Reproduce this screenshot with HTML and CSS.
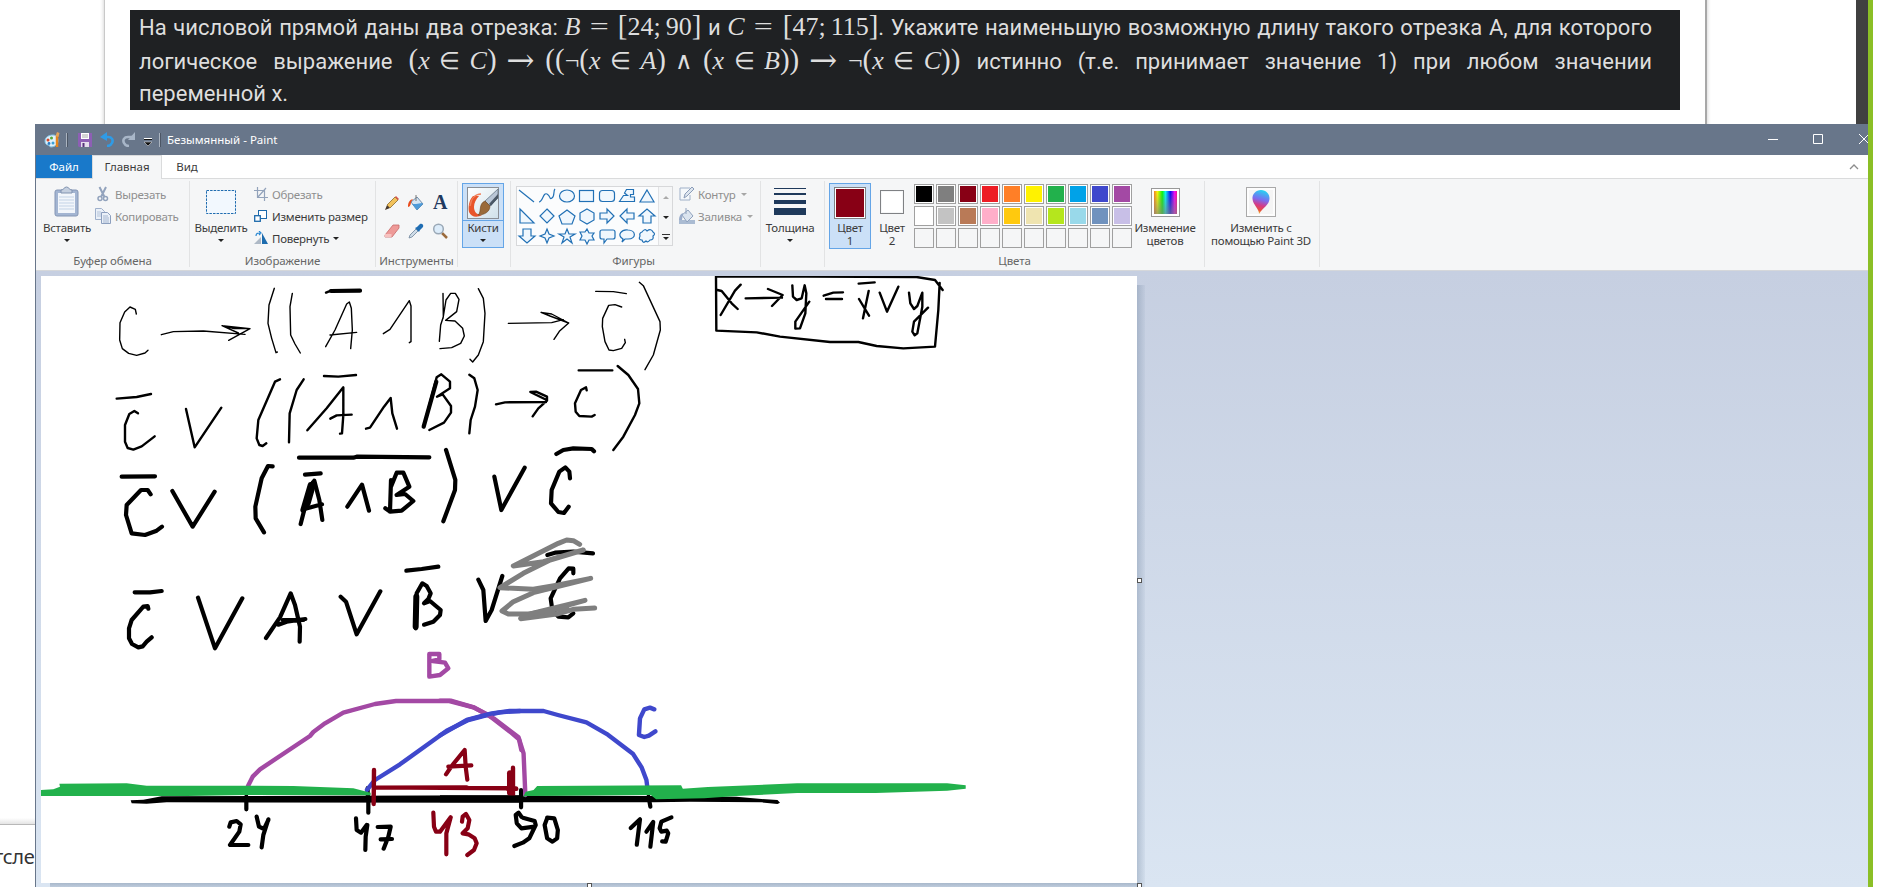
FILE: index.html
```html
<!DOCTYPE html>
<html lang="ru">
<head>
<meta charset="utf-8">
<title>Безымянный - Paint</title>
<link rel="stylesheet" href="styles.css">
</head>
<body>
<div class="screen">
  <div class="sheet"></div>
  <div class="scrollbar"></div>
  <div class="edge"></div>
  <div class="sheet-end"><span>тсле</span></div>

  <section class="task">
    <div class="line l1">На числовой прямой даны два отрезка: <span class="math m1"><i>B</i><b class="eq">=</b><b class="num"><em>[</em>24;<q></q>90<em>]</em></b></span> и <span class="math m2"><i>C</i><b class="eq">=</b><b class="num"><em>[</em>47;<q></q>115<em>]</em></b></span>. Укажите наименьшую возможную длину такого отрезка А, для которого</div>
    <div class="line l2">логическое выражение <span class="math m3"><b><em>(</em><i>x</i></b><s>∈</s><b><i>C</i><em>)</em></b><s class="arr">→</s><b><em>((</em>¬<em>(</em><i>x</i></b><s>∈</s><b><i>A</i><em>)</em></b><s>∧</s><b><em>(</em><i>x</i></b><s>∈</s><b><i>B</i><em>))</em></b><s class="arr">→</s><b>¬<em>(</em><i>x</i></b><s>∈</s><b><i>C</i><em>))</em></b></span> истинно (т.е. принимает значение 1) при любом значении</div>
    <div class="line l3">переменной х.</div>
  </section>

  <main class="window">
    <header class="titlebar">
      <svg class="t-app" width="16" height="18" viewBox="0 0 16 18"><path d="M1 10C1 6 5 4 9 4s5 3 5 6-3 6-7 6c-2 0-1-2-3-2-2 0-3-2-3-4z" fill="#dff0fa" stroke="#7fc3e6"/><circle cx="4" cy="9" r="1.5" fill="#d9472b"/><circle cx="7.500" cy="7" r="1.500" fill="#54a838"/><circle cx="5" cy="12.500" r="1.400" fill="#287bc4"/><circle cx="9" cy="12" r="1.500" fill="#3aa0d8"/><path d="M13 5v11" stroke="#e8861c" stroke-width="2.500"/><path d="M11.500 5l1.500-4 2.500 1-1 4z" fill="#e2a45a"/></svg>
      <i class="tsep"></i>
      <svg class="t-save" width="14" height="14" viewBox="0 0 14 14"><path d="M0 0h14v14H1L0 13z" fill="#8d5fb4"/><path d="M3 0h8v6H3z" fill="#fff"/><path d="M4 2h6M4 4h6" stroke="#aaa"/><path d="M3 9h8v5H3z" fill="#e4dcec"/><path d="M4.500 10h2v4h-2z" fill="#55337a"/></svg>
      <svg class="t-undo" width="14" height="15" viewBox="0 0 14 15"><path d="M3 5h5c4 0 5.500 3 4 6-1 2-2.500 3-5 3" fill="none" stroke="#2f9be6" stroke-width="2.600"/><path d="M0 5l7-5v9z" fill="#2f9be6"/></svg>
      <svg class="t-redo" width="14" height="15" viewBox="0 0 14 15"><path d="M11 5H6C2 5 .5 8 2 11c1 2 2.500 3 5 3" fill="none" stroke="#a8b6c8" stroke-width="2.600"/><path d="M13 0v8H6z" fill="#a8b6c8"/></svg>
      <svg class="t-more" width="8" height="8" viewBox="0 0 8 8"><path d="M0 .5h8" stroke="#fff"/><path d="M0 1.500h8" stroke="#111"/><path d="M0 4h8L4 8z" fill="#111" stroke="#eee" stroke-width=".5"/></svg>
      <i class="tsep s2"></i>
      <span class="title">Безымянный - Paint</span>
      <svg class="controls" width="100" height="31" viewBox="0 0 100 31"><path d="M0 15.500h10M45.500 10.500h9v9h-9zM91 10l10 10M101 10l-10 10" fill="none" stroke="#fff"/></svg>
    </header>
    <nav class="tabs">
      <span class="tab file">Файл</span><span class="tab active">Главная</span><span class="tab view">Вид</span>
      <svg class="chev" width="10" height="7" viewBox="0 0 10 7"><path d="M1 6l4-4 4 4" fill="none" stroke="#8c8c8c" stroke-width="1.300"/></svg>
    </nav>

    <section class="ribbon">
      <div class="group g1">
        <div class="body">
          <div class="big"><div class="ico"><svg width="26" height="32" viewBox="0 0 26 32"><rect x="1" y="4" width="23" height="26" rx="2" fill="#a3b5d2" stroke="#8496b5"/><path d="M4 7h17v20H4z" fill="#f2f6fb"/><path d="M5 11h15M5 14h15M5 17h15M5 20h15M5 23h15" stroke="#c3d3e6"/><path d="M7 7V4c3 0 3-3 5.500-3S15 4 18 4v3z" fill="#c4cfdf" stroke="#8193b0"/></svg></div><span>Вставить</span><u class="dn"></u></div>
          <div class="rows">
            <div class="row off"><svg width="16" height="16" viewBox="0 0 16 16"><path d="M4.500 1l5 10M11 1L6 11" stroke="#92a3bd" stroke-width="2"/><circle cx="5" cy="12.500" r="2" fill="none" stroke="#92a3bd" stroke-width="1.500"/><circle cx="10.500" cy="12.500" r="2" fill="none" stroke="#92a3bd" stroke-width="1.500"/></svg><span>Вырезать</span></div>
            <div class="row off"><svg width="16" height="16" viewBox="0 0 16 16"><path d="M.5.5h6l3 3v8h-9z" fill="#eaf0f8" stroke="#9fb0cb"/><path d="M2 4h4M2 6h5M2 8h5" stroke="#b5c4da"/><path d="M6.500 4.500h6l3 3v8h-9z" fill="#eaf0f8" stroke="#8c9fbe"/><path d="M8 8h5M8 10h6M8 12h6M8 14h6" stroke="#a5b6d0"/></svg><span>Копировать</span></div>
          </div>
        </div>
        <div class="name">Буфер обмена</div>
      </div>
      <div class="group g2">
        <div class="body">
          <div class="big"><div class="ico"><svg width="30" height="26" viewBox="0 0 30 26"><rect x=".5" y="1.500" width="29" height="23" fill="#f2f8fe" stroke="#1f6cb0" stroke-dasharray="2.500 1.100"/></svg></div><span>Выделить</span><u class="dn"></u></div>
          <div class="rows">
            <div class="row off"><svg width="14" height="14" viewBox="0 0 14 14"><path d="M3.500 0v10.500H14M0 3.500h10.500V14M3.500 10.500L12 1" fill="none" stroke="#93a3bb" stroke-width="1.200"/></svg><span>Обрезать</span></div>
            <div class="row"><svg width="14" height="14" viewBox="0 0 14 14"><rect x="4.500" y="1.500" width="8" height="8" fill="#fff" stroke="#1c69ab"/><rect x=".7" y="6.700" width="5.600" height="5.600" fill="#fff" stroke="#1c69ab" stroke-width="1.300"/></svg><span>Изменить размер</span></div>
            <div class="row"><svg width="14" height="14" viewBox="0 0 14 14"><path d="M0 13h7V6z" fill="#aeb9c6"/><path d="M8 2v11h6z" fill="#1d6cae"/><path d="M2 5c0-3 2-3 4-3M5 0l2 2-2 2" fill="none" stroke="#2b88d2" stroke-width="1.200"/></svg><span>Повернуть</span><u class="dn"></u></div>
          </div>
        </div>
        <div class="name">Изображение</div>
      </div>
      <div class="group g3">
        <div class="body tools">
          <svg viewBox="0 0 16 16"><path d="M1 15l2-5 3 3z" fill="#4a3a2c"/><path d="M3 10l8-8 3 3-8 8z" fill="#f2c25b" stroke="#8a6a2c" stroke-width=".8"/><path d="M11 2l1-1 3 3-1 1z" fill="#d9534a"/></svg>
          <svg viewBox="0 0 16 16"><path d="M3 7l6-5 6 7-6 6z" fill="#d6e6f4" stroke="#6f8ba8"/><path d="M8 9l6-1 1 1-6 6-5-6z" fill="#4f9bd8"/><path d="M8 0v6" stroke="#777"/><path d="M5 4C1 5 0 8 0 12c2 0 3-3 3-5z" fill="#ea4b1c"/></svg>
          <svg viewBox="0 0 16 16"><text x="8" y="14" text-anchor="middle" class="glyph">A</text></svg>
          <svg viewBox="0 0 16 16"><path d="M1 12l8-10h6v3l-7 9H1z" fill="#ee9a98" stroke="#c66a69" stroke-width=".8"/><path d="M1 11h6.500v3H1z" fill="#f7c2c0"/></svg>
          <svg viewBox="0 0 16 16"><path d="M1 15l1-3 6-6 2 2-6 6z" fill="#cfdce8" stroke="#70859c" stroke-width=".8"/><path d="M7 5l2-1 3-3c2-1 4 1 3 3l-3 3-1 2z" fill="#1f6db3"/></svg>
          <svg viewBox="0 0 16 16"><path d="M10 10l5 5" stroke="#9b6b3d" stroke-width="2.500"/><circle cx="6.500" cy="6" r="4.800" fill="#dcecfa" stroke="#9aa8b6" stroke-width="1.500"/></svg>
        </div>
        <div class="name">Инструменты</div>
      </div>
      <div class="group g4">
        <div class="body">
          <div class="brush big"><div class="ico"><svg width="32" height="32" viewBox="0 0 32 32"><defs><linearGradient id="bg" x2="1" y2="1"><stop stop-color="#fff"/><stop offset="1" stop-color="#cfe0ea"/></linearGradient></defs><rect x=".5" y=".5" width="31" height="31" fill="url(#bg)" stroke="#8a8f96"/><path d="M6 9C2 13 1 20 2 25c2 5 8 6 13 3-5 0-8-3-8-8 0-4 2-8 5-11z" fill="#e8552b"/><path d="M14 7C8 7 4 12 3 19" fill="none" stroke="#f0825e" stroke-width="1.500"/><path d="M31 2v9l-8 8-5-5z" fill="#b9c6d6" stroke="#5a6b7b" stroke-width=".7"/><path d="M31 7l-9 10 2 2 7-8z" fill="#4a5866"/><path d="M18 14l5 5c0 6-6 9-12 9 4-3 0-11 7-14z" fill="#9a6a3a" stroke="#6d4723" stroke-width=".6"/></svg></div><span>Кисти</span><u class="dn"></u></div>
        </div>
      </div>
      <div class="group g5">
        <div class="body">
          <div class="gallery">
            <svg width="141" height="58" viewBox="0 0 141 58"><g fill="#f0f7fd" stroke="#2170b5" stroke-width="1.200">
              <path d="M2 3l15 12"/><path d="M22 15c4 0 4-10 8-8s2 6 5 4 1-7 3-9" fill="none"/><ellipse cx="50" cy="9" rx="7.500" ry="6"/><rect x="62.500" y="3.500" width="14" height="11"/><rect x="82.500" y="3.500" width="15" height="11" rx="3"/><path d="M102.500 14.500l4-6h4l-3-2.500 2-3.500h7v5h-3v2.500h4v4.500z"/><path d="M130 3l7 12h-14z"/>
              <path d="M3 22v14h14z"/><path d="M30 22l7 7-7 7-7-7z"/><path d="M50 23l8 6-3 8H45l-3-8z"/><path d="M70 22l7 4v7l-7 4-7-4v-7z"/><path d="M83 26h7v-4l7 7-7 7v-4h-7z"/><path d="M117 26h-7v-4l-7 7 7 7v-4h7z"/><path d="M126 36v-7h-4l8-7 8 7h-4v7z"/>
              <path d="M6 42v7H2l8 7 8-7h-4v-7z"/><path d="M30 42l2 5 5 2-5 2-2 5-2-5-5-2 5-2z"/><path d="M50 42l2 5h6l-5 3 2 6-5-4-5 4 2-6-5-3h6z"/><path d="M70 42l2 4h5l-2 3 2 4h-5l-2 4-2-4h-5l2-4-2-4h5z"/><path d="M85 43h11q2 0 2 2v5q0 2-2 2h-6l-3 4v-4h-2q-2 0-2-2v-5q0-2 2-2z"/><path d="M106 52c-7-4-1-10 5-9 8 0 9 9 0 9h-3l-3 3z"/><path d="M125 45q3-4 5-1 4-3 6 1 3 2 0 4 1 4-3 4-2 3-4 1-3 3-4-1-4 0-2-4-1-3 2-4z"/></g></svg>
            <div class="scroll"><div><u class="up"></u></div><div><u class="dn"></u></div><div class="last"><u class="dn"></u></div></div>
          </div>
          <div class="rows">
            <div class="row off"><svg width="16" height="16" viewBox="0 0 16 16"><path d="M11 2H1v12h10V9" fill="#f5f8fb" stroke="#9fb0c8"/><path d="M5 12l1-4 7-7 2 2-7 7z" fill="#dde5ef" stroke="#8a9cb8"/></svg><span>Контур</span><u class="dn"></u></div>
            <div class="row off"><svg width="16" height="16" viewBox="0 0 16 16"><path d="M0 12h16v4H0z" fill="#aabbd2"/><path d="M3 7l6-5 5 6-6 6z" fill="#dbe4ef" stroke="#8ea1bd"/><path d="M7 0v6" stroke="#8ea1bd"/><path d="M4 5C1 6 0 9 0 12h3z" fill="#9aacca"/></svg><span>Заливка</span><u class="dn"></u></div>
          </div>
        </div>
        <div class="name">Фигуры</div>
      </div>
      <div class="group g6">
        <div class="body"><div class="big"><div class="ico"><svg width="32" height="28" viewBox="0 0 32 28"><path d="M0 0h32v1H0zM0 5h32v2H0zM0 12h32v4H0zM0 20h32v7H0z" fill="#1e395b"/></svg></div><span>Толщина</span><u class="dn"></u></div></div>
      </div>
      <div class="group g7">
        <div class="body">
          <div class="big sel"><div class="ico"><div class="cur c1"></div></div><span>Цвет<br>1</span></div>
          <div class="big sec"><div class="ico"><div class="cur c2"></div></div><span>Цвет<br>2</span></div>
          <div class="palette">
            <i class="k0"></i><i class="k1"></i><i class="k2"></i><i class="k3"></i><i class="k4"></i><i class="k5"></i><i class="k6"></i><i class="k7"></i><i class="k8"></i><i class="k9"></i>
            <i class="k10"></i><i class="k11"></i><i class="k12"></i><i class="k13"></i><i class="k14"></i><i class="k15"></i><i class="k16"></i><i class="k17"></i><i class="k18"></i><i class="k19"></i>
            <i></i><i></i><i></i><i></i><i></i><i></i><i></i><i></i><i></i><i></i>
          </div>
          <div class="big edit"><div class="ico"><div class="rainbow"></div></div><span>Изменение<br>цветов</span></div>
        </div>
        <div class="name">Цвета</div>
      </div>
      <div class="group g8">
        <div class="body"><div class="big"><div class="ico"><svg width="30" height="30" viewBox="0 0 30 30"><defs><linearGradient id="p1" x1=".6" y1="0" x2=".4" y2="1"><stop stop-color="#22d6f2"/><stop offset=".4" stop-color="#7a6cf0"/><stop offset=".65" stop-color="#d63a86"/><stop offset=".85" stop-color="#e8503a"/><stop offset="1" stop-color="#f5c22a"/></linearGradient></defs><rect x=".5" y=".5" width="29" height="29" fill="#fdfdfd" stroke="#a9a9a9"/><rect x="3" y="3" width="24" height="24" fill="#f5f5f5"/><path d="M15 3c5 0 9 4 8.500 9-.5 6-6 8-10.500 15 .5-5-6-9-6.500-15C6 7 10 3 15 3z" fill="url(#p1)"/></svg></div><span>Изменить с<br>помощью Paint 3D</span></div></div>
      </div>
    </section>

    <section class="work">
      <div class="paper">
        <svg class="drawing" width="1096" height="607" viewBox="41 276 1096 607">
          <g class="ink" transform="translate(30 270) scale(.33333)">
            <g class="w1">
              <path d="M319 132L316 118 300 111 284 126 270 158 269 210 277 236 296 250 320 256 345 249 354 241"/>
              <path d="M394 194L430 185 520 183 645 193M596 211L660 176 576 167 625 189M576 167L612 176 660 176"/>
              <path d="M733 55L717 105 714 160 725 205 738 248 742 246M787 70L780 110 782 195 795 222 811 249"/>
              <path d="M887 230L915 180 950 102 958 96 964 115 967 180 962 236M900 195L980 187M1060 191L1080 178 1138 92 1143 108 1143 215 1138 218"/>
              <path d="M1239 70L1240 140 1232 165 1228 214M1239 145L1248 90 1262 70 1276 70 1287 88 1280 125 1247 151 1275 153 1298 175 1303 198 1292 220 1265 233 1230 236"/>
              <path d="M1345 56L1360 85 1365 130 1360 215 1345 255 1328 276 1320 268"/>
            </g>
            <path class="w3" d="M903 63L990 62"/><path class="w2" d="M888 68L903 62"/>
            <g class="w2">
              <path d="M260 386L320 381 363 372M324 430L313 423 298 432 285 465 285 515 293 534 310 539 335 529 374 499M468 417L494 532 574 413"/>
              <path d="M750 328L735 335 685 450 680 505 688 525 698 528 709 520M821 328L800 360 779 430 777 517"/>
              <path d="M882 318L925 320 978 315M832 481L890 415 940 352 940 435 936 490 930 491M901 446L920 436 965 434M1008 476L1020 473 1062 410 1082 384 1087 430 1101 476"/>
              <path d="M1181 470L1220 322 1234 313 1260 335 1260 355 1221 380 1238 373 1263 408 1263 428 1242 458 1198 480M1318 314L1333 325 1343 360 1335 410 1322 450 1318 490"/>
            </g>
            <path class="w3" d="M1181 470L1219 335"/>
            <g class="w3">
              <path d="M275 620L375 619M362 673L353 660 333 660 290 705 288 735 305 790 345 795 380 782 396 770M427 663L488 770 554 665"/>
              <path d="M728 589L714 588 695 625 676 710 677 745 702 787M807 563L970 563 980 560 1198 562M825 614L872 610"/>
              <path d="M812 762L835 672 853 632 868 690 877 750M826 716L876 703M952 710L996 644 1017 722M1248 540L1276 630 1275 660 1240 754"/>
              <path d="M1083 630L1080 725M1083 650L1100 608 1120 608 1138 650 1100 675 1125 672 1150 693 1115 722 1080 725 1066 715"/>
            </g>
            <path class="w5" d="M820 720L842 645M833 700L850 640"/>
          </g>
          <g class="ink" transform="translate(480 270) scale(.33333)">
            <g class="w1">
              <path d="M85 160L215 158 250 149M222 208L238 184 266 159 215 132 183 127 210 138 266 159M347 64L400 65 439 71M425 111L405 104 386 106 368 145 367 170 375 215 387 240 400 242 425 235 436 218 434 208M478 37L490 47 540 155 541 180 520 255 495 299"/>
            </g>
            <g class="w2">
              <path d="M48 403L75 397 198 396M158 439L175 415 201 392 201 380 168 365 151 366 200 390M296 301L397 301M320 361L318 352 303 360 285 400 287 425 298 438 335 440 344 435M413 288L445 315 474 357 478 400 465 435 430 500 400 540"/>
              <path d="M712 60L725 63 755 100 773 117M782 44L765 62 722 135M797 85L906 83M864 57L908 75 876 108M937 46L939 80 950 90 965 85 974 46 979 70 976 130 960 175 946 176 946 155 988 95M1031 77L1060 68 1089 67M1038 87L1086 87M1136 41L1184 37M1137 87L1167 137M1166 63L1149 145M1199 68L1221 125 1255 50M1287 68L1291 100 1302 117 1312 108 1327 68 1327 110 1312 190 1304 196 1297 185 1302 155 1344 113"/>
              <path d="M708 20L980 20 1310 21 1365 30 1388 60M1379 39L1375 120 1365 230 1270 235 1190 228 1135 216 1050 216 900 200 830 187 709 182 708 20"/>
            </g>
            <g class="w3"><path d="M229 552L250 540 280 535 335 537 342 544M43 620L64 720 134 593M270 625L268 605 256 592 238 605 215 660 213 700 235 726 252 729 266 710"/></g>
          </g>
          <g class="ink" transform="translate(100 530) scale(.33333)">
            <g class="w3">
              <path d="M104 187L150 187 185 183M145 236L143 228 130 230 95 270 87 295 87 325 96 342 115 352 128 349 140 335 155 322M294 203L345 355 427 205M498 324L540 262 572 190 585 225 600 290 599 335M535 284L560 275 616 267M722 200L738 215 770 313 841 184M1135 149L1150 180 1157 273 1175 240 1207 138"/>
              <path d="M919 122L965 117 1015 110M947 295L950 190 967 160 980 168 992 190 985 207 972 220 990 213 1022 240 1020 255 1000 275 972 284"/>
              <path d="M1342 75L1365 68 1420 65 1479 70M1420 130L1420 116 1406 115 1380 145 1352 205 1357 240 1375 260 1405 262 1420 250"/>
            </g>
            <path class="w5" d="M947 290L949 200"/><path class="w3" d="M548 270H610"/>
            <g class="gray w4"><path d="M1439 43L1420 32 1400 30 1375 40 1240 108 1330 95 1450 60 1350 90 1270 130 1200 173 1300 178 1375 165 1472 145 1300 188 1240 215 1206 243 1225 252 1290 252 1455 211 1350 240 1262 266 1370 252 1420 238 1484 234"/><path d="M1290 252L1400 232"/></g>
            <path class="purple w4" d="M988 372L988 440 1020 435 1045 415 1035 398 998 393 1018 388 1018 372 988 372"/>
          </g>
          <g class="ink" transform="translate(0 680) scale(.33333)">
            <path class="fillk" d="M392 361L430 359 485 349 1560 346 1560 368 500 367 440 371 395 370Z"/>
            <path class="w3" d="M739 350V388M1105 350V398M1103 324V345M688 440L692 427 710 423 722 433 718 455 690 495 745 495M770 410L777 440 792 447 805 420M805 418L790 465 785 502M1068 415L1070 450 1083 458 1100 435M1102 435L1097 470 1096 510M1133 441L1172 440 1165 470 1151 506M1142 478L1176 477"/>
            <path class="purple w4" d="M744 318L758 290 780 268 930 168 940 156 975 130 1030 98 1125 72 1188 63 1348 63 1420 82 1465 105 1530 155 1557 178 1564 210"/>
            <path class="blue w4" d="M1101 330L1125 300 1200 253 1290 188 1340 152 1405 120 1450 108 1500 97 1560 93"/>
            <path class="fillg" d="M123 330L160 328 180 320 178 311 380 310 440 317 740 317 880 318 1060 325 1112 338 1112 346 740 345 560 348 123 348Z"/>
            <g class="red"><path class="w4" d="M1122 270L1121 372M1128 322L1548 325M1128 323L1400 322M1539 263V348"/><path class="w5" d="M1530 280V338"/><path class="w3" d="M1338 283L1355 258 1394 210 1397 260 1402 299M1345 260L1414 256M1300 398L1302 440 1308 455 1320 455 1352 412M1352 412L1339 460 1339 523M1386 425L1388 410 1398 402 1408 420 1403 445 1388 460 1405 463 1424 475 1430 490 1422 510 1402 525"/></g>
          </g>
          <g class="ink" transform="translate(440 640) scale(.35714 .33333)">
            <path class="fillk" d="M0 466L600 468 830 470 900 477 945 480 952 488 945 492 900 487 700 485 600 487 0 487Z"/>
            <path class="w3" d="M227 450V502M584 470L589 500M228 530L220 518 212 525 215 550 228 565 265 560M232 533L265 543 268 555 250 595 232 608 208 618M300 535L293 555 300 595 315 605 328 595 330 570 320 535 300 533M534 564L560 538 551 614M578 575L597 546 589 620M648 532L620 545 615 565 620 575 635 572 639 580 632 605 622 604"/>
            <path class="purple w4" d="M0 182H30L95 202 150 235 220 292 234 340 239 465"/>
            <path class="blue w4" d="M0 286L75 240 145 220 195 213H290L330 225 410 247 470 284 540 341 565 383 578 420 580 437M600 208L588 203 572 208 560 235 557 285 572 291 585 287 603 274"/>
            <path class="red w3" d="M190 447H214"/>
            <path class="fillg" d="M233 470L240 455 262 450 272 438 675 436 680 446 750 441 1000 430 1420 430 1472 436 1472 446 1420 452 1220 459 1000 459 830 468 740 475 605 478 590 465 245 468Z"/>
          </g>
        </svg>
        <i class="handle hr"></i><i class="handle hb"></i><i class="handle hc"></i>
      </div>
    </section>
  </main>
</div>
</body>
</html>
```

FILE: styles.css
```css
* { box-sizing: border-box; }
body { margin: 0; background: #fff; }
i, b, s, u, em { font-style: normal; font-weight: normal; text-decoration: none; }
svg { display: block; flex: none; }

.screen { position: relative; width: 1895px; height: 887px; overflow: hidden; background: #fff; }
.sheet { position: absolute; left: 104px; top: -10px; width: 1603px; height: 400px; border: solid #c9c9c9; border-width: 0 2px 0 1px; border-right-color: #a8a8a8; box-shadow: 0 0 4px rgba(0,0,0,.22); }
.scrollbar { position: absolute; left: 1856px; top: 0; width: 12px; height: 124px; background: #404040; }
.edge { position: absolute; left: 1868px; top: 0; width: 5px; height: 887px; background: #8bbf26; z-index: 3; }
.sheet-end { position: absolute; left: 0; top: 818px; width: 35px; height: 69px; overflow: hidden; background: linear-gradient(#fff, #e4e4e4 6px, #b8b8b8 6px, #b8b8b8 7px, #fff 7px); }
.sheet-end span { display: block; margin: 25px 0 0 -6px; font: 20px/28px "Noto Sans", sans-serif; letter-spacing: -.3px; color: #333; }

.task { position: absolute; left: 130px; top: 10px; width: 1550px; height: 100px; padding: 1px 28px 0 9px; background: #1f2123; color: #dedede; font-family: Roboto, sans-serif; font-size: 22px; }
.line { height: 34px; line-height: 34px; white-space: nowrap; text-align: justify; text-align-last: justify; }
.l2 { height: 32px; }
.l3 { text-align-last: left; }
.math { display: inline-flex; justify-content: space-between; align-items: baseline; height: 20px; line-height: 20px; font-family: "Liberation Serif", serif; font-size: 26px; text-align-last: left; }
.math i { font-style: italic; }
.math em { font-size: 29px; }
.math s { font-family: "DejaVu Sans", sans-serif; font-size: 24px; font-weight: 200; }
.math .arr { font-family: "DejaVu Math TeX Gyre", "DejaVu Serif", serif; font-size: 30px; }
.math q { display: inline-block; width: 5px; quotes: none; }
.math q::before, .math q::after { content: none; }
.eq { transform: scaleX(1.3); }
.m1 { width: 137px; }
.m2 { width: 151px; }
.m3 { width: 552px; }
.l1 { word-spacing: -2px; }

.window { position: absolute; left: 35px; top: 124px; width: 1833px; height: 763px; border-left: 1px solid #68768a; background: #f5f6f7; font: 11.5px/13px "Noto Sans", sans-serif; letter-spacing: -.25px; color: #3b3b3b; overflow: hidden; }
.titlebar { display: flex; align-items: center; height: 31px; background: #68768a; color: #fff; }
.t-app { margin-left: 8px; }
.tsep { width: 2px; height: 14px; margin-left: 6px; background: linear-gradient(90deg, #aab3bf 50%, #4c5665 50%); }
.t-save { margin-left: 10px; }
.t-undo { margin-left: 8px; }
.t-redo { margin-left: 8px; }
.t-more { margin: 5px 0 0 8px; }
.s2 { margin-left: 7px; }
.title { margin-left: 6px; letter-spacing: 0; }
.controls { margin-left: auto; overflow: hidden; }

.tabs { display: flex; height: 24px; background: #fff; border-bottom: 1px solid #dadbdc; }
.tab { height: 23px; line-height: 24px; text-align: center; letter-spacing: 0; }
.file { width: 56px; background: #1979ca; color: #fff; }
.active { width: 70px; height: 24px; border: 1px solid #dadbdc; border-bottom: 0; background: #f5f6f7; line-height: 22px; }
.view { width: 50px; }
.chev { margin: 8px 9px 0 auto; }

.ribbon { display: flex; height: 92px; padding-top: 2px; border-bottom: 1px solid #d5d7da; background: #f5f6f7; }
.group { display: flex; flex-direction: column; height: 86px; padding-top: 2px; border-right: 1px solid #e2e3e4; flex: none; }
.body { display: flex; height: 72px; align-items: flex-start; }
.name { height: 13px; color: #666; text-align: center; white-space: nowrap; letter-spacing: -.1px; }
.g1 { width: 154px; } .g2 { width: 186px; } .g3 { width: 82px; } .g4 { width: 53px; }
.g5 { width: 250px; } .g6 { width: 64px; } .g7 { width: 380px; } .g8 { width: 115px; }
.g5 .name { padding-right: 4px; }
.big { display: flex; flex-direction: column; align-items: center; flex: none; text-align: center; white-space: nowrap; }
.ico { display: flex; align-items: center; justify-content: center; height: 38px; }
.big u.dn { margin-top: 5px; }
.dn, .up { width: 0; height: 0; border: solid transparent; border-width: 3px 3px 0; border-top-color: #222; }
.up { border-width: 0 3px 3px; border-bottom-color: #aaa; }
.row { display: flex; align-items: center; height: 22px; white-space: nowrap; }
.row svg { margin-right: 4px; }
.row u.dn { margin-left: 4px; }
.off { color: #8f8f8f; }
.off u.dn { border-top-color: #a6a6a6; margin-left: 5px; }
.g1 .big { width: 50px; margin: 0 3px 0 6px; }
.g2 .big { width: 54px; margin: 0 6px 0 4px; }
.tools { display: grid; grid-template-columns: repeat(3, 16px); grid-auto-rows: 16px; align-content: start; gap: 12px 8px; padding: 12px 0 0 8px; }
.tools svg { width: 16px; height: 16px; }
.glyph { font: bold 20px "Liberation Serif", serif; fill: #1f3a5f; }
.brush { width: 42px; height: 65px; margin-left: 4px; border: 1px solid #64a5e7; background: linear-gradient(#cbe0f7 36px, #64a5e7 36px, #64a5e7 37px, #cbe0f7 37px); }
.brush .ico { height: 37px; }
.gallery { display: flex; width: 157px; height: 60px; margin: 3px 6px 0 5px; border: 1px solid #d7d8da; background: #fbfcfd; flex: none; }
.scroll { width: 14px; background: #f5f6f7; border-left: 1px solid #e1e2e4; }
.scroll div { display: flex; flex-direction: column; height: 20px; align-items: center; justify-content: center; }
.last::before { content: ""; width: 8px; height: 1px; margin-bottom: 2px; background: #333; }
.g5 .row svg { margin-right: 3px; }
.g6 .big { width: 58px; }
.g7 .big { width: 42px; }
.g7 .sel { margin-left: 4px; height: 66px; border: 1px solid #64a5e7; background: #cbe0f7; }
.sel .ico { height: 37px; }
.cur { border: 1px solid #7f8184; padding: 1px; background-clip: content-box; }
.c1 { width: 32px; height: 32px; background-color: #880015; box-shadow: inset 0 0 0 1px #fff; }
.c2 { width: 24px; height: 24px; background-color: #fff; }
.palette { display: grid; grid-template-columns: repeat(10, 20px); grid-auto-rows: 20px; gap: 2px; margin: 1px 0 0 1px; }
.palette i { border: 1px solid #a0a0a0; padding: 1px; background-clip: content-box; }
.palette i:nth-child(-n+20) { box-shadow: inset 0 0 0 1px #fff; }
.g7 .edit { width: 62px; margin-left: 2px; }
.rainbow { width: 29px; height: 29px; border: 1px solid #999; box-shadow: inset 0 0 0 2px #fff; background: linear-gradient(transparent, rgba(128,128,128,.75)), linear-gradient(90deg, #f33, #ff0 20%, #0f0 38%, #0ff 50%, #00f 68%, #f0f 84%, #f03); }
.g8 .big { width: 112px; }
.k0 { background-color: #000; } .k1 { background-color: #7f7f7f; } .k2 { background-color: #880015; } .k3 { background-color: #ed1c24; } .k4 { background-color: #ff7f27; }
.k5 { background-color: #fff200; } .k6 { background-color: #22b14c; } .k7 { background-color: #00a2e8; } .k8 { background-color: #3f48cc; } .k9 { background-color: #a349a4; }
.k10 { background-color: #fff; } .k11 { background-color: #c3c3c3; } .k12 { background-color: #b97a57; } .k13 { background-color: #ffaec9; } .k14 { background-color: #ffc90e; }
.k15 { background-color: #efe4b0; } .k16 { background-color: #b5e61d; } .k17 { background-color: #99d9ea; } .k18 { background-color: #7092be; } .k19 { background-color: #c8bfe7; }

.work { height: 616px; padding: 5px 0 0 5px; background: linear-gradient(#c6cfe1, #dae5f2); }
.paper { position: relative; width: 1096px; height: 607px; background: #fff; }
.paper::before { content: ""; position: absolute; left: 1096px; top: 9px; width: 8px; height: 607px; background: linear-gradient(90deg, rgba(120,140,165,.4), rgba(140,160,185,.1)); }
.paper::after { content: ""; position: absolute; left: 9px; top: 607px; width: 1087px; height: 8px; background: linear-gradient(rgba(120,140,165,.5), rgba(140,160,185,.1)); }
.handle { position: absolute; z-index: 2; width: 5px; height: 5px; border: 1px solid #555; background: #fff; }
.hr { left: 1096px; top: 302px; }
.hb { left: 546px; top: 607px; }
.hc { left: 1096px; top: 607px; }
.ink path { fill: none; stroke: #000; stroke-linecap: round; stroke-linejoin: round; vector-effect: non-scaling-stroke; }
.ink .w1, .ink .w1 path { stroke-width: 1.4px; }
.ink .w2, .ink .w2 path { stroke-width: 2.4px; }
.ink .w3, .ink .w3 path { stroke-width: 4.2px; }
.ink .w4, .ink .w4 path { stroke-width: 4.4px; }
.ink .w5 { stroke-width: 6px; }
.ink .gray path { stroke: #7f7f7f; stroke-width: 5px; }
.ink .purple { stroke: #a349a4; }
.ink .blue { stroke: #3f48cc; }
.ink .red, .ink .red path { stroke: #880015; }
.ink .fillk { fill: #000; stroke: none; }
.ink .fillg { fill: #22b14c; stroke: none; }
```
